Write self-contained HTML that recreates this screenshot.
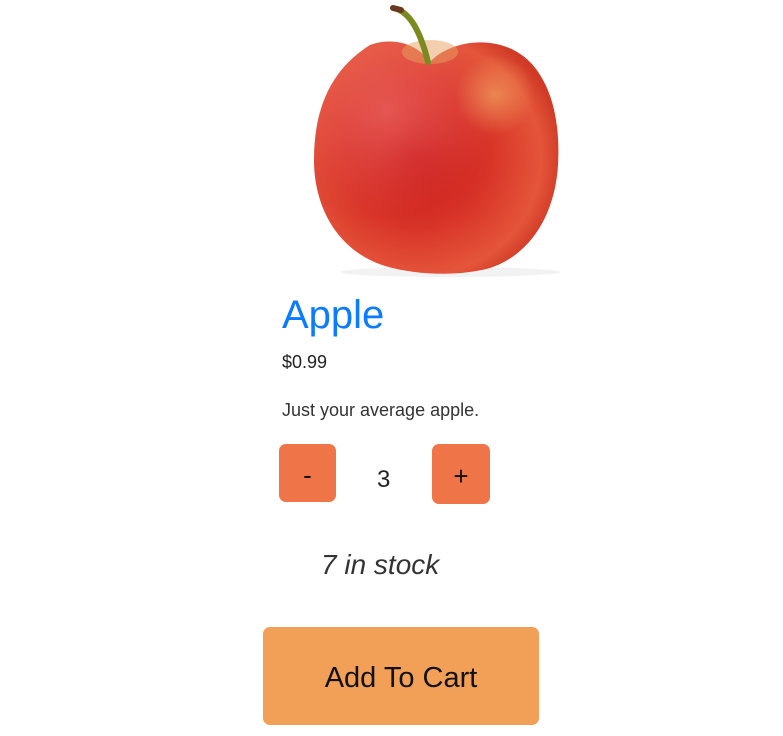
<!DOCTYPE html>
<html><head><style>
body{margin:0;width:783px;height:736px;background:#fff;position:relative;overflow:hidden;font-family:"Liberation Sans",sans-serif;color:#222;}
.a{position:absolute;white-space:nowrap}
.btn{position:absolute;background:#ef7549;border-radius:7px;color:#111;text-align:center;font-size:26px}
</style></head><body>
<svg class="a" style="left:300px;top:0" width="290" height="280" viewBox="300 0 290 280">
<defs>
<radialGradient id="g" cx="0.42" cy="0.5" r="0.6">
<stop offset="0" stop-color="#c81818"/><stop offset="0.5" stop-color="#d83428"/><stop offset="0.85" stop-color="#e4553a"/><stop offset="1" stop-color="#d03a26"/>
</radialGradient>
<radialGradient id="h" cx="0.3" cy="0.3" r="0.45">
<stop offset="0" stop-color="#f07070" stop-opacity="0.6"/><stop offset="1" stop-color="#f07070" stop-opacity="0"/>
</radialGradient>
<radialGradient id="y" cx="0.5" cy="0.5" r="0.5">
<stop offset="0" stop-color="#f0a060" stop-opacity="0.7"/><stop offset="1" stop-color="#f0a060" stop-opacity="0"/>
</radialGradient>
</defs>
<ellipse cx="450" cy="272" rx="110" ry="5" fill="#f2f2f2"/>
<path d="M430 62 C450 40 500 32 530 62 C555 88 560 130 558 165 C555 215 530 255 490 268 C460 276 420 276 385 266 C340 252 314 210 314 160 C314 110 330 70 370 45 C395 36 418 45 430 62 Z" fill="url(#g)"/>
<path d="M430 62 C450 40 500 32 530 62 C555 88 560 130 558 165 C555 215 530 255 490 268 C460 276 420 276 385 266 C340 252 314 210 314 160 C314 110 330 70 370 45 C395 36 418 45 430 62 Z" fill="url(#h)"/>
<ellipse cx="495" cy="95" rx="40" ry="40" fill="url(#y)"/>
<ellipse cx="430" cy="52" rx="28" ry="12" fill="#e8a060" opacity="0.5"/>
<path d="M397 9 C410 14 420 30 428 62" stroke="#7a8a20" stroke-width="6" fill="none" stroke-linecap="round"/>
<path d="M393 8 L401 10" stroke="#6a3a20" stroke-width="6" stroke-linecap="round"/>
</svg>
<div class="a" style="left:282px;top:293px;font-size:40px;color:#0b7cff">Apple</div>
<div class="a" style="left:282px;top:352px;font-size:18px">$0.99</div>
<div class="a" style="left:282px;top:400px;font-size:18px;color:#333">Just your average apple.</div>
<div class="btn" style="left:279px;top:444px;width:57px;height:58px;line-height:62px">-</div>
<div class="a" style="left:377px;top:466px;font-size:24px">3</div>
<div class="btn" style="left:432px;top:444px;width:58px;height:60px;line-height:64px">+</div>
<div class="a" style="left:321px;top:549px;font-size:28px;font-style:italic;color:#333">7 in stock</div>
<div class="btn" style="left:263px;top:627px;width:276px;height:98px;line-height:102px;background:#f2a057;font-size:29px">Add To Cart</div>
</body></html>
